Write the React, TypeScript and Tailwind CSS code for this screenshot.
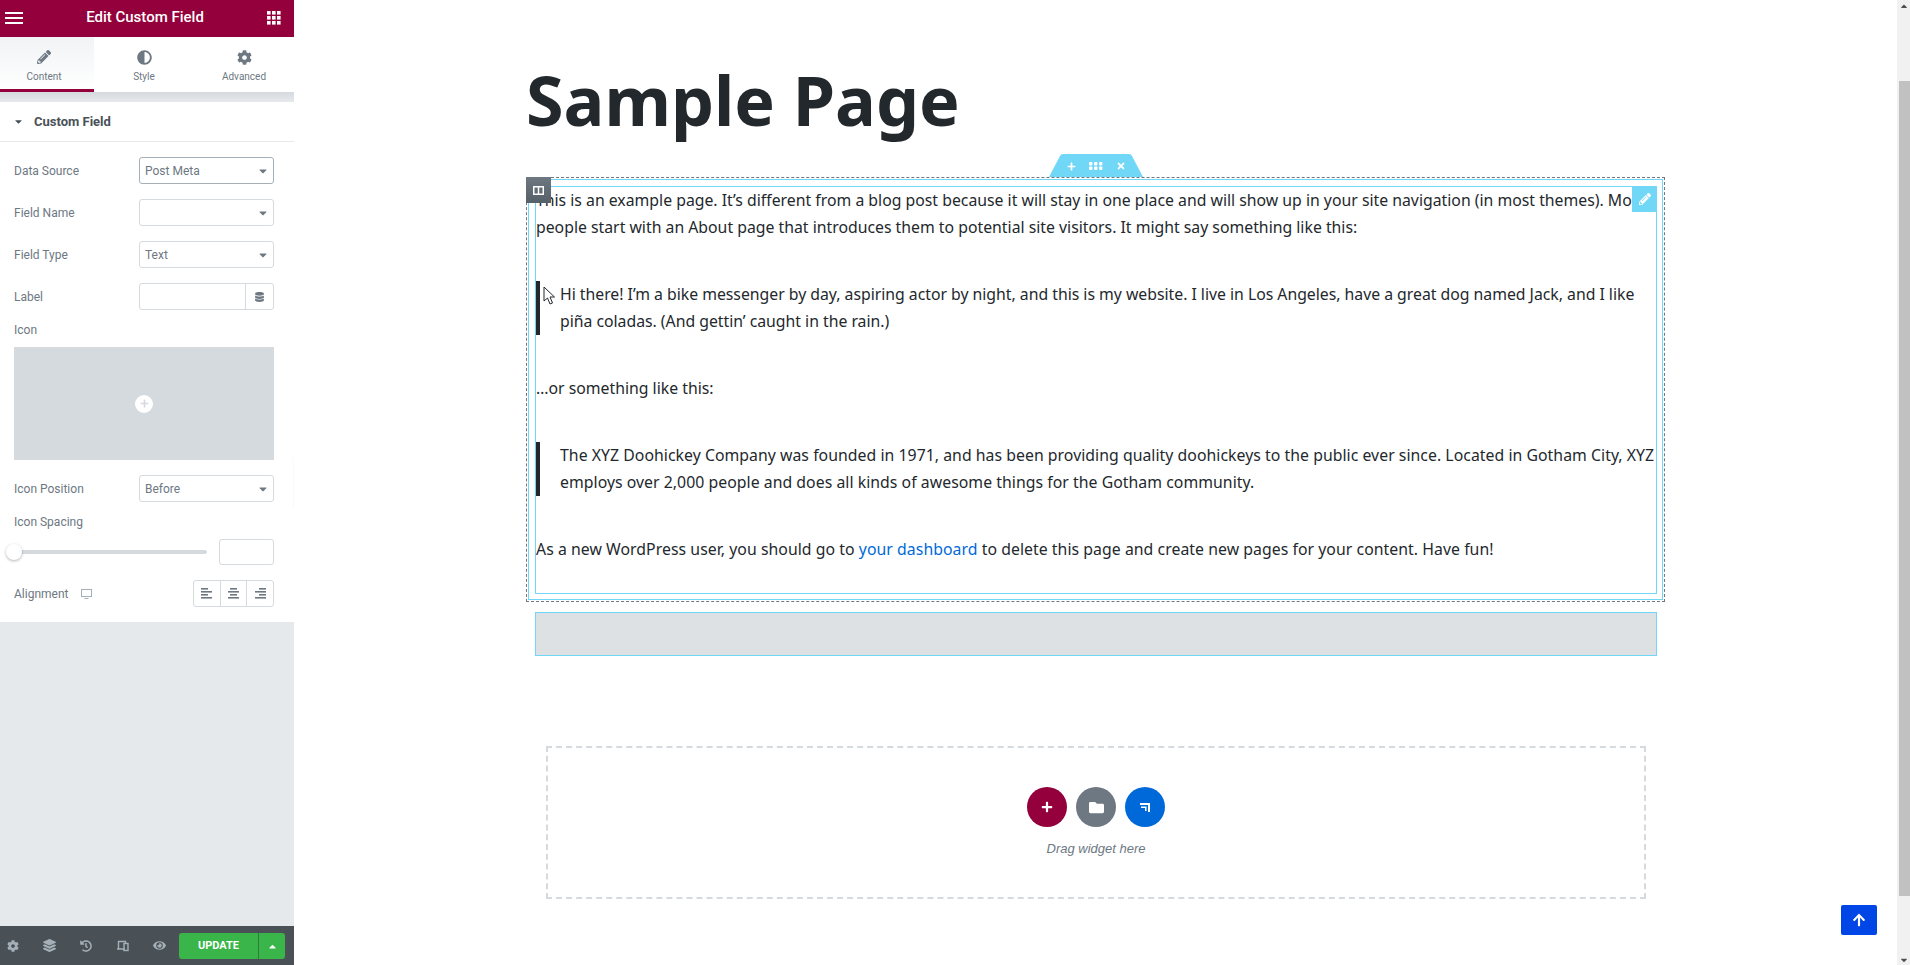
import { FaAdjust, FaArrowUp, FaCaretDown, FaCaretUp, FaChevronLeft, FaCog, FaDatabase, FaEye, FaFolder, FaHistory, FaLayerGroup, FaPencilAlt, FaPlus, FaTimes } from 'react-icons/fa'

function Select({ value }: { value: string }) {
  return (
    <div className="flex items-center justify-between w-[135px] h-[27px] border border-[#d5dadf] rounded-[3px] pl-[5px] pr-[4px] text-[12px] text-[#6d7882]">
      <span>{value}</span>
      <FaCaretDown className="w-[12px] h-[12px] text-[#6d7882]" />
    </div>
  )
}

function Row({ label, children }: { label: string; children: React.ReactNode }) {
  return (
    <div className="flex items-center justify-between h-[27px] mb-[15px]">
      <span className="text-[12px] text-[#6d7882]">{label}</span>
      {children}
    </div>
  )
}

function AlignIcon({ side }: { side: 'left' | 'center' | 'right' }) {
  const rows = side === 'left'
    ? [[0, 7], [0, 11], [0, 7], [0, 11]]
    : side === 'center'
      ? [[2, 7], [0, 11], [2, 7], [0, 11]]
      : [[4, 7], [0, 11], [4, 7], [0, 11]]
  return (
    <svg width="11" height="11" viewBox="0 0 11 11" fill="#6d7882">
      {rows.map(([x, w], i) => (
        <rect key={i} x={x} y={i * 3} width={w} height="1.6" />
      ))}
    </svg>
  )
}

function Sidebar() {
  return (
    <aside className="relative w-[294px] h-full shrink-0 flex flex-col bg-[#e6e9ec] font-['Roboto',sans-serif] shadow-[1px_0_4px_rgba(0,0,0,0.12)]">
      {/* Header */}
      <header className="flex items-center justify-between h-[37px] pl-[5px] pr-[13px] pb-[2px] bg-[#93003c] text-white">
        <svg width="18" height="12" viewBox="0 0 18 12" fill="white">
          <rect y="0" width="18" height="2" />
          <rect y="5" width="18" height="2" />
          <rect y="10" width="18" height="2" />
        </svg>
        <span className="text-[15px] font-medium">Edit Custom Field</span>
        <svg width="14" height="14" viewBox="0 0 14 14" fill="white">
          {[0, 5, 10].map((y) => [0, 5, 10].map((x) => <rect key={`${x}-${y}`} x={x} y={y} width="3.6" height="3.6" />))}
        </svg>
      </header>

      {/* Tabs */}
      <div className="flex h-[55px] bg-white text-[#6d7882] text-[10px]">
        <div className="flex flex-col items-center w-[94px] pr-[6px] pt-[13px] border-b-[3px] border-[#93003c] bg-gradient-to-b from-[#f1f3f5] to-white">
          <FaPencilAlt className="w-[14px] h-[14px]" />
          <span className="mt-[5px]">Content</span>
        </div>
        <div className="flex flex-col items-center w-[100px] pt-[13px]">
          <FaAdjust className="w-[15px] h-[15px]" />
          <span className="mt-[4px]">Style</span>
        </div>
        <div className="flex flex-col items-center w-[100px] pt-[13px]">
          <FaCog className="w-[15px] h-[15px]" />
          <span className="mt-[4px]">Advanced</span>
        </div>
      </div>
      <div className="h-[10px] bg-gradient-to-b from-[#d5dadf] to-[#e6e9ec]" />

      {/* Section */}
      <div className="bg-white h-[520px]">
        <div className="flex items-center h-[40px] pl-[13px] border-b border-[#e6e9ec] text-[13px] font-bold text-[#495157]">
          <FaCaretDown className="w-[11px] h-[11px] text-[#495157] mr-[10px]" />
          Custom Field
        </div>
        <div className="pl-[14px] pr-[20px] pt-[15px]">
          <Row label="Data Source">
            <div className="flex items-center justify-between w-[135px] h-[27px] border border-[#a4afb7] rounded-[3px] pl-[5px] pr-[4px] text-[12px] text-[#6d7882]">
              <span>Post Meta</span>
              <FaCaretDown className="w-[12px] h-[12px]" />
            </div>
          </Row>
          <Row label="Field Name"><Select value="" /></Row>
          <Row label="Field Type"><Select value="Text" /></Row>
          <div className="flex items-center justify-between h-[27px] mb-[13px]">
            <span className="text-[12px] text-[#6d7882]">Label</span>
            <div className="flex w-[135px] h-[27px] border border-[#d5dadf] rounded-[3px]">
              <div className="flex-1 border-r border-[#d5dadf]" />
              <div className="flex items-center justify-center w-[27px]">
                <FaDatabase className="w-[9px] h-[10px] text-[#6d7882]" />
              </div>
            </div>
          </div>

          <div className="text-[12px] leading-[14px] text-[#6d7882] mb-[10px]">Icon</div>
          <div className="flex items-center justify-center w-[260px] h-[113px] bg-[#d5dadf] mb-[15px]">
            <div className="flex items-center justify-center w-[18px] h-[18px] rounded-full bg-white">
              <FaPlus className="w-[9px] h-[9px] text-[#d5dadf]" />
            </div>
          </div>

          <Row label="Icon Position"><Select value="Before" /></Row>
          <div className="text-[12px] leading-[14px] text-[#6d7882] mb-[10px] -mt-[2px]">Icon Spacing</div>
          <div className="flex items-center justify-between h-[26px] mb-[15px]">
            <div className="relative w-[193px] h-[4px] rounded-[2px] bg-[#d5dadf]">
              <div className="absolute -left-[8px] -top-[6px] w-[16px] h-[16px] rounded-full bg-white shadow-[0_1px_3px_rgba(0,0,0,0.3)]" />
            </div>
            <div className="w-[55px] h-[26px] border border-[#d5dadf] rounded-[3px]" />
          </div>
          <div className="flex items-center justify-between h-[27px]">
            <div className="flex items-center text-[12px] text-[#6d7882]">
              Alignment
              <svg className="ml-[13px]" width="11" height="10" viewBox="0 0 11 10" fill="none" stroke="#a4afb7">
                <rect x="0.5" y="0.5" width="10" height="7" />
                <path d="M3.5 9.5h4" />
              </svg>
            </div>
            <div className="flex w-[81px] h-[27px] border border-[#d5dadf] rounded-[3px]">
              <div className="flex flex-1 items-center justify-center border-r border-[#d5dadf]"><AlignIcon side="left" /></div>
              <div className="flex flex-1 items-center justify-center border-r border-[#d5dadf]"><AlignIcon side="center" /></div>
              <div className="flex flex-1 items-center justify-center"><AlignIcon side="right" /></div>
            </div>
          </div>
        </div>
      </div>

      <div className="flex-1" />

      {/* Footer */}
      <footer className="flex items-center justify-between h-[39px] pl-[7px] pr-[9px] bg-[#495157] text-[#a4afb7]">
        <div className="flex items-center gap-[24px]">
          <FaCog className="w-[12px] h-[12px]" />
          <FaLayerGroup className="w-[13px] h-[13px]" />
          <FaHistory className="w-[12px] h-[12px]" />
          <svg width="13" height="12" viewBox="0 0 13 12" fill="none" stroke="currentColor" strokeWidth="1.4">
            <path d="M9 9H1M2.5 9V1.5h7V3" />
            <rect x="8" y="3.5" width="4" height="7" />
          </svg>
          <FaEye className="w-[13px] h-[13px]" />
        </div>
        <div className="flex h-[26px] mt-[1px] rounded-[3px] bg-[#39b54a] text-white">
          <div className="flex items-center justify-center w-[80px] border-r border-[#2d7d3a] text-[11px] font-bold">UPDATE</div>
          <div className="flex items-center justify-center w-[26px]"><FaCaretUp className="w-[11px] h-[11px]" /></div>
        </div>
      </footer>

      {/* Collapse handle */}
      <div className="absolute left-[294px] top-[457px] flex items-center justify-center w-[15px] h-[50px] bg-[#e6e9ec] shadow-[1px_1px_3px_rgba(0,0,0,0.12)]">
        <FaChevronLeft className="w-[7px] h-[7px] text-[#6d7882]" />
      </div>
    </aside>
  )
}

function Canvas() {
  return (
    <main className="relative flex-1 h-full overflow-hidden bg-white font-['Noto_Sans',sans-serif] text-[#23282d]">
      <div className="ml-[232px] w-[1139px]">
        <h1 className="pt-[56px] h-[177px] text-[68.2px] leading-[88px] font-bold">Sample Page</h1>

        {/* Editable section */}
        <section className="relative h-[425px] border border-dashed border-[#6d7882] p-[1px]">
          <div className="h-full border border-[#71d7f7] pl-[6px] pr-[5px] pt-[6px]">
            <div className="relative h-[408px] border border-[#71d7f7] text-[15.8px] leading-[27px]">
              <p className="w-[1140px] -ml-[1px] pl-[1px]">This is an example page. It’s different from a blog post because it will stay in one place and will show up in your site navigation (in most themes). Most people start with an About page that introduces them to potential site visitors. It might say something like this:</p>
              <blockquote className="mt-[40px] pl-[20px] border-l-4 border-[#23282d] tracking-[-0.015px]">Hi there! I’m a bike messenger by day, aspiring actor by night, and this is my website. I live in Los Angeles, have a great dog named Jack, and I like piña coladas. (And gettin’ caught in the rain.)</blockquote>
              <p className="mt-[40px]">…or something like this:</p>
              <blockquote className="mt-[40px] pl-[20px] border-l-4 border-[#23282d] tracking-[0.04px]">The XYZ Doohickey Company was founded in 1971, and has been providing quality doohickeys to the public ever since. Located in Gotham City, XYZ employs over 2,000 people and does all kinds of awesome things for the Gotham community.</blockquote>
              <p className="mt-[40px] tracking-[0.05px]">As a new WordPress user, you should go to <span className="text-[#0069d9]">your dashboard</span> to delete this page and create new pages for your content. Have fun!</p>

              {/* Widget edit handle */}
              <div className="absolute -right-[1px] -top-[1px] flex items-center justify-center w-[25px] h-[26px] bg-[#71d7f7] text-white">
                <FaPencilAlt className="w-[12px] h-[12px]" />
              </div>
            </div>
          </div>

          {/* Column handle */}
          <div className="absolute -left-[1px] -top-[1px] flex items-center justify-center w-[25px] h-[26px] bg-gradient-to-b from-[#6d7882] to-[#556068]">
            <svg width="11" height="9" viewBox="0 0 11 9" fill="none" stroke="white" strokeWidth="1.5">
              <rect x="0.75" y="0.75" width="9.5" height="7.5" />
              <path d="M5.5 1v7" />
            </svg>
          </div>

          {/* Section handle */}
          <div className="absolute left-[522px] -top-[24px] w-[94px] h-[23px]">
            <svg className="absolute inset-0" width="94" height="23" viewBox="0 0 94 23">
              <path d="M0 23 L11 2 Q12 0 14 0 H80 Q82 0 83 2 L94 23 Z" fill="#71d7f7" />
            </svg>
            <div className="relative flex items-center justify-center gap-[13px] h-full pt-[1px] text-white">
              <FaPlus className="w-[9px] h-[9px]" />
              <svg width="14" height="8" viewBox="0 0 14 8" fill="white">
                {[0, 5, 10].map((x) => [0, 4.5].map((y) => <rect key={`${x}-${y}`} x={x} y={y} width="3.4" height="3.4" rx="0.8" />))}
              </svg>
              <FaTimes className="w-[10px] h-[10px]" />
            </div>
          </div>
        </section>

        {/* Empty section placeholder */}
        <div className="mt-[10px] ml-[9px] mr-[8px] h-[44px] bg-[#dee1e3] border border-[#71d7f7]" />

        {/* Add section */}
        <div className="flex flex-col items-center mt-[90px] ml-[20px] mr-[19px] h-[153px] pt-[39px] border-2 border-dashed border-[#d5dadf]">
          <div className="flex gap-[9px] text-white">
            <div className="flex items-center justify-center w-[40px] h-[40px] rounded-full bg-[#93003c]"><FaPlus className="w-[12px] h-[12px]" /></div>
            <div className="flex items-center justify-center w-[40px] h-[40px] rounded-full bg-[#6d7882]"><FaFolder className="w-[15px] h-[15px]" /></div>
            <div className="flex items-center justify-center w-[40px] h-[40px] rounded-full bg-[#0069d9]">
              <svg width="11" height="11" viewBox="0 0 11 11" fill="white">
                <path d="M0 1h10v9H8V3H0zM1 4.5h5.5V9H5V6H1z" />
              </svg>
            </div>
          </div>
          <span className="mt-[12px] text-[13px] italic font-['Liberation_Sans',sans-serif] text-[#6d7882]">Drag widget here</span>
        </div>
      </div>

      {/* Scroll to top */}
      <div className="absolute left-[1547px] top-[905px] flex items-center justify-center w-[36px] h-[30px] rounded-[2px] bg-[#0045e6] text-white">
        <FaArrowUp className="w-[14px] h-[14px]" />
      </div>

      {/* Mouse cursor */}
      <svg className="absolute left-[249px] top-[286px]" width="13" height="20" viewBox="0 0 13 20" fill="white" stroke="#23282d" strokeWidth="1">
        <path d="M1 1v14l3.5-3 2.5 6 2.5-1-2.5-6h4.5z" />
      </svg>
    </main>
  )
}

function Scrollbar() {
  return (
    <div className="flex flex-col items-end w-[13px] h-full shrink-0 bg-[#f1f1f1]">
      <div className="flex justify-center w-full h-[81px] pt-[1px]">
        <FaCaretUp className="w-[10px] h-[10px] text-[#505050]" />
      </div>
      <div className="w-[11px] h-[815px] bg-[#c1c1c1]" />
      <div className="flex-1 flex justify-center items-end w-full">
        <FaCaretDown className="w-[10px] h-[10px] text-[#505050]" />
      </div>
    </div>
  )
}

export default function App() {
  return (
    <div className="flex w-[1910px] h-[965px] overflow-hidden bg-white">
      <Sidebar />
      <Canvas />
      <Scrollbar />
    </div>
  )
}
